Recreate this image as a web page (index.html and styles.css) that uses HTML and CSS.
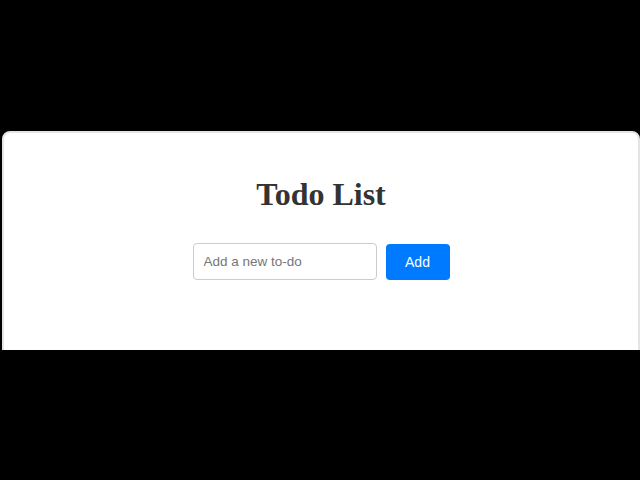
FILE: index.html
```html
<!DOCTYPE html>
<html>
<head>
<meta charset="utf-8">
<title>Todo List</title>
<link rel="stylesheet" href="styles.css">
</head>
<body>
<div class="stage">
  <div class="viewport">
    <div class="card">
      <h1 class="title">Todo List</h1>
      <form class="add-form">
        <input class="todo-input" type="text" placeholder="Add a new to-do">
        <button class="add-btn" type="button">Add</button>
      </form>
    </div>
  </div>
</div>
</body>
</html>
```

FILE: styles.css
```css
html, body {
  margin: 0;
  padding: 0;
  background: #000;
  height: 100%;
}
.stage {
  padding-top: 131px;
}
.viewport {
  height: 219px;
  overflow: hidden;
  padding-left: 2px;
}
.card {
  box-sizing: border-box;
  width: 638px;
  height: 260px;
  background: #fff;
  border: 2px solid #e4e4e4;
  border-radius: 8px;
  padding: 43px 20px 20px;
  display: flex;
  flex-direction: column;
  align-items: center;
}
.title {
  margin: 0 0 30px;
  font-family: "Liberation Serif", "Times New Roman", serif;
  font-size: 32px;
  font-weight: bold;
  color: #333;
  line-height: 37px;
}
.add-form {
  display: flex;
  align-items: center;
  gap: 9px;
  margin: 0;
}
.todo-input {
  box-sizing: border-box;
  width: 184px;
  height: 37px;
  padding: 0 10px;
  border: 1px solid #ccc;
  border-radius: 4px;
  font-family: "Liberation Sans", Arial, sans-serif;
  font-size: 13.5px;
  color: #333;
  outline: none;
}
.todo-input::placeholder {
  color: #767676;
}
.add-btn {
  box-sizing: border-box;
  width: 64px;
  height: 36px;
  border: none;
  border-radius: 4px;
  background: #007bff;
  color: #fff;
  font-family: "Liberation Sans", Arial, sans-serif;
  font-size: 14px;
  cursor: pointer;
}
```
